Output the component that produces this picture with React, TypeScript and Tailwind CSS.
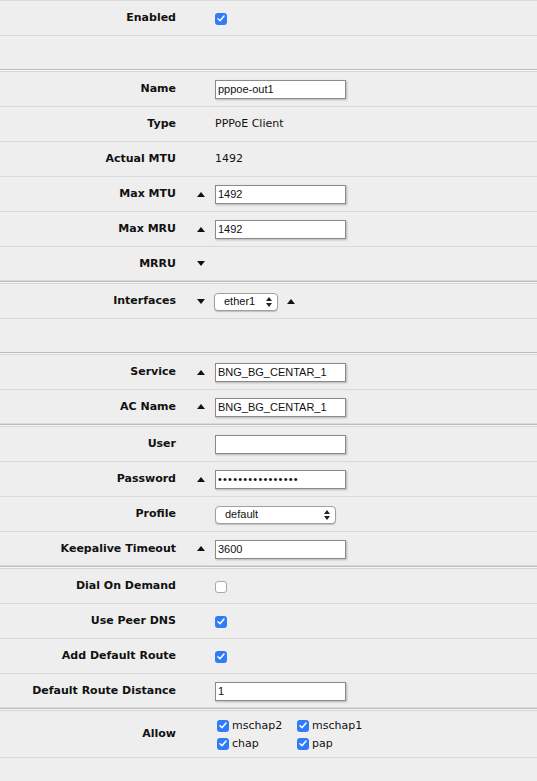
import React from "react";

type Arrow = "up" | "down" | undefined;

const Tri: React.FC<{ dir: "up" | "down" }> = ({ dir }) => (
  <svg width="8" height="5" viewBox="0 0 8 5" className="block">
    {dir === "up" ? <path d="M4 0L8 5H0z" fill="#111" /> : <path d="M0 0H8L4 5z" fill="#111" />}
  </svg>
);

const Check: React.FC<{ on?: boolean }> = ({ on }) =>
  on ? (
    <span className="flex h-[12px] w-[12px] items-center justify-center rounded-[3px] bg-[#2f7cf6]">
      <svg width="8" height="7" viewBox="0 0 8 7">
        <path d="M1 3.8L3 5.8L7 1" fill="none" stroke="#fff" strokeWidth="1.5" strokeLinecap="round" strokeLinejoin="round" />
      </svg>
    </span>
  ) : (
    <span className="block h-[12px] w-[12px] rounded-[3px] border border-[#a8a8a8] bg-white" />
  );

const TextBox: React.FC<{ value: string; dots?: boolean }> = ({ value, dots }) => (
  <div className="flex h-[19px] w-[131px] items-center border border-[#8a8a8a] bg-white pl-[2px] text-[11px] text-[#111] shadow-[1px_1px_2px_rgba(0,0,0,0.25)] [font-family:'Liberation_Sans',Arial,sans-serif]">
    {dots ? <span className="tracking-[1.2px]">{"\u2022".repeat(16)}</span> : value}
  </div>
);

const Select: React.FC<{ value: string; width: string }> = ({ value, width }) => (
  <div
    className={`flex h-[18px] ${width} items-center justify-between rounded-[4px] border border-[#a0a0a0] bg-white pl-[9px] pr-[5px] text-[11px] text-[#111] shadow-[0_1px_1px_rgba(0,0,0,0.2)] [font-family:'Liberation_Sans',Arial,sans-serif]`}>
    <span>{value}</span>
    <svg width="6" height="10" viewBox="0 0 6 10">
      <path d="M3 0L6 4H0z M0 6H6L3 10z" fill="#222" />
    </svg>
  </div>
);

const Row: React.FC<{ label?: string; arrow?: Arrow; h?: string; children?: React.ReactNode }> = ({
  label,
  arrow,
  h = "h-[35px]",
  children,
}) => (
  <div className={`flex ${h} items-center border-b border-[#d9d9d9]`}>
    <div className="w-[176px] shrink-0 pt-[1px] text-right text-[11px] font-bold text-[#111]">{label}</div>
    <div className="flex w-[39px] shrink-0 pl-[21px]">{arrow && <Tri dir={arrow} />}</div>
    <div className="flex items-center pt-[1px] text-[11px] text-[#111]">{children}</div>
  </div>
);

const Sep = () => <div className="h-[3px] border-y border-t-[#bcbcbc] border-b-[#d4d4d4] bg-[#f7f7f7]" />;

const Blank = () => <div className="h-[33px]" />;

export default function App() {
  const allow = [
    ["mschap2", "mschap1"],
    ["chap", "pap"],
  ];
  return (
    <div className="h-[781px] w-[537px] overflow-hidden border-t border-[#d9d9d9] bg-[#eeeeee] [font-family:'DejaVu_Sans',Verdana,sans-serif]">
      <Row label="Enabled">
        <Check on />
      </Row>
      <Blank />
      <Sep />
      <Row label="Name">
        <TextBox value="pppoe-out1" />
      </Row>
      <Row label="Type">PPPoE Client</Row>
      <Row label="Actual MTU">1492</Row>
      <Row label="Max MTU" arrow="up">
        <TextBox value="1492" />
      </Row>
      <Row label="Max MRU" arrow="up">
        <TextBox value="1492" />
      </Row>
      <Row label="MRRU" arrow="down" h="h-[34px]" />
      <Sep />
      <Row label="Interfaces" arrow="down">
        <div className="-ml-[1px] flex items-center gap-[9px]">
          <Select value="ether1" width="w-[64px]" />
          <Tri dir="up" />
        </div>
      </Row>
      <Blank />
      <Sep />
      <Row label="Service" arrow="up">
        <TextBox value="BNG_BG_CENTAR_1" />
      </Row>
      <Row label="AC Name" arrow="up" h="h-[34px]">
        <TextBox value="BNG_BG_CENTAR_1" />
      </Row>
      <Sep />
      <Row label="User">
        <TextBox value="" />
      </Row>
      <Row label="Password" arrow="up">
        <TextBox value="" dots />
      </Row>
      <Row label="Profile">
        <Select value="default" width="w-[121px]" />
      </Row>
      <Row label="Keepalive Timeout" arrow="up" h="h-[34px]">
        <TextBox value="3600" />
      </Row>
      <Sep />
      <Row label="Dial On Demand">
        <Check />
      </Row>
      <Row label="Use Peer DNS">
        <Check on />
      </Row>
      <Row label="Add Default Route">
        <Check on />
      </Row>
      <Row label="Default Route Distance" h="h-[34px]">
        <TextBox value="1" />
      </Row>
      <Sep />
      <Row label="Allow" h="h-[47px]">
        <div className="ml-[2px] grid grid-cols-[80px_80px] gap-y-[6px]">
          {allow.flat().map((a) => (
            <div key={a} className="flex items-center gap-[3px]">
              <Check on />
              <span className="leading-[12px]">{a}</span>
            </div>
          ))}
        </div>
      </Row>
    </div>
  );
}
